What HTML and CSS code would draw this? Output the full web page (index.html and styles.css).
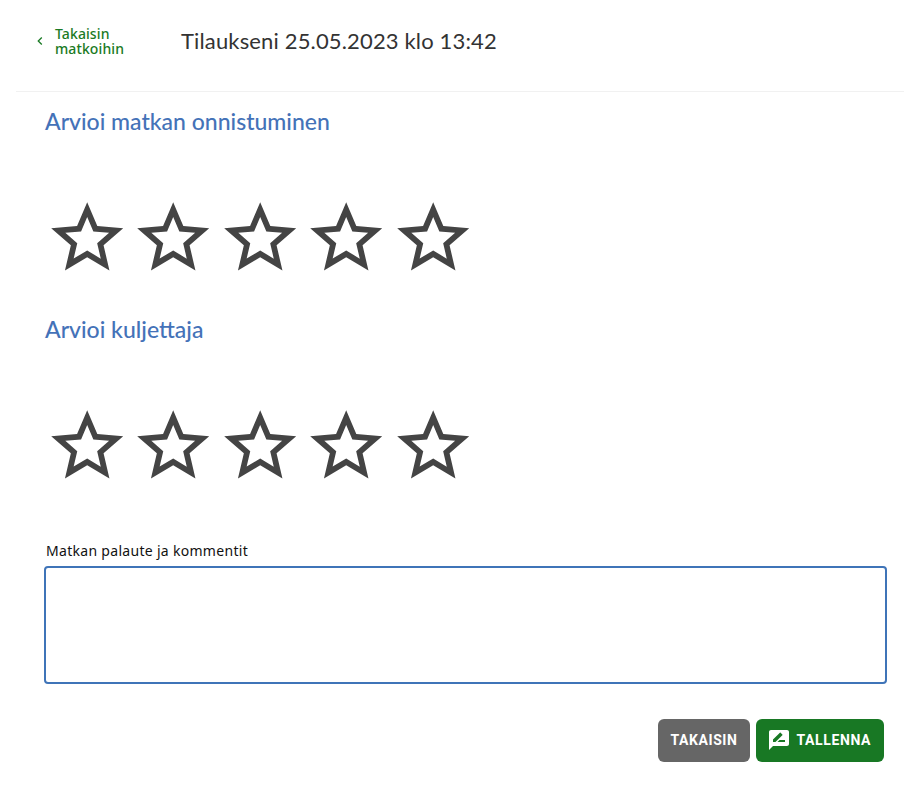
FILE: index.html
```html
<!DOCTYPE html>
<html lang="fi">
<head>
    <meta charset="utf-8">
    <title>Tilaukseni</title>
    <link rel="stylesheet" href="styles.css">
</head>
<body>
    <svg class="defs" width="0" height="0">
        <symbol id="star" viewBox="0 0 24 24">
            <path d="M22 9.24l-7.19-.62L12 2 9.19 8.63 2 9.24l5.46 4.73L5.82 21 12 17.27 18.18 21l-1.63-7.03L22 9.24zM12 15.4l-3.76 2.27 1-4.28-3.32-2.88 4.38-.38L12 6.1l1.71 4.04 4.38.38-3.32 2.88 1 4.28L12 15.4z"/>
        </symbol>
    </svg>

    <div class="header">
        <a class="back-link" href="#">
            <svg class="chevron" viewBox="0 0 24 24"><path d="M15.41 7.41L14 6l-6 6 6 6 1.41-1.41L10.83 12z"/></svg>
            <span>Takaisin<br>matkoihin</span>
        </a>
        <h1>Tilaukseni 25.05.2023 klo 13:42</h1>
    </div>

    <div class="content">
        <h2>Arvioi matkan onnistuminen</h2>
        <div class="stars">
            <svg><use href="#star"/></svg>
            <svg><use href="#star"/></svg>
            <svg><use href="#star"/></svg>
            <svg><use href="#star"/></svg>
            <svg><use href="#star"/></svg>
        </div>

        <h2>Arvioi kuljettaja</h2>
        <div class="stars">
            <svg><use href="#star"/></svg>
            <svg><use href="#star"/></svg>
            <svg><use href="#star"/></svg>
            <svg><use href="#star"/></svg>
            <svg><use href="#star"/></svg>
        </div>

        <label class="field-label" for="comment">Matkan palaute ja kommentit</label>
        <textarea id="comment"></textarea>

        <div class="actions">
            <button class="btn btn-grey">TAKAISIN</button>
            <button class="btn btn-green">
                <svg viewBox="0 0 24 24"><path d="M20 2H4c-1.1 0-2 .9-2 2v18l4-4h14c1.1 0 2-.9 2-2V4c0-1.1-.9-2-2-2zM6 14v-2.47l6.88-6.88c.2-.2.51-.2.71 0l1.77 1.77c.2.2.2.51 0 .71L8.47 14H6zm12 0h-7.5l2-2H18v2z"/></svg>
                TALLENNA
            </button>
        </div>
    </div>
</body>
</html>
```

FILE: styles.css
```css
body {
    margin: 0;
    background: #fff;
    font-family: "Noto Sans", sans-serif;
}
.defs {
    position: absolute;
}
.header {
    display: flex;
    align-items: center;
    box-sizing: border-box;
    height: 92px;
    padding-bottom: 10px;
    margin: 0 16px;
    border-bottom: 1px solid #f1f1f1;
}
.back-link {
    display: flex;
    align-items: center;
    width: 165px;
    padding-left: 16px;
    box-sizing: border-box;
    color: #1a7a24;
    font-size: 14px;
    line-height: 15px;
    font-weight: 500;
    letter-spacing: 0.1px;
    text-decoration: none;
}
.chevron {
    width: 16px;
    height: 16px;
    margin-right: 7px;
    fill: #1a7a24;
}
h1 {
    margin: 0;
    font-family: Lato, sans-serif;
    font-size: 22px;
    font-weight: 400;
    letter-spacing: 0.15px;
    color: #333;
}
.content {
    padding: 0 33px 0 44px;
}
h2 {
    margin: 0 0 0 1px;
    font-family: Lato, sans-serif;
    font-size: 23px;
    line-height: 28px;
    font-weight: 500;
    color: #4472b8;
}
.content > h2:first-child {
    padding-top: 15px;
}
.stars {
    display: flex;
    margin-top: 60px;
    margin-bottom: 34px;
}
.stars svg {
    width: 86.4px;
    height: 86.4px;
    fill: #444;
}
.field-label {
    display: block;
    margin-top: 51px;
    margin-left: 2px;
    font-size: 14px;
    line-height: 20px;
    letter-spacing: 0.3px;
    color: #111;
}
textarea {
    display: block;
    box-sizing: border-box;
    width: 843px;
    height: 118px;
    margin-top: 5px;
    border: 2px solid #3f74b8;
    border-radius: 4px;
    outline: none;
    resize: none;
}
.actions {
    display: flex;
    justify-content: flex-end;
    gap: 6px;
    margin-top: 35px;
    padding-right: 3px;
}
.btn {
    display: flex;
    align-items: center;
    height: 43px;
    padding: 0 13px;
    border: none;
    border-radius: 6px;
    color: #fff;
    font-family: Roboto, sans-serif;
    font-size: 14px;
    font-weight: 700;
    letter-spacing: 0.6px;
}
.btn svg {
    width: 24px;
    height: 24px;
    margin-right: 6px;
    margin-left: -2px;
    fill: #fff;
}
.btn-grey {
    background: #666;
    padding: 0 12px;
}
.btn-green {
    background: #187824;
}
```
